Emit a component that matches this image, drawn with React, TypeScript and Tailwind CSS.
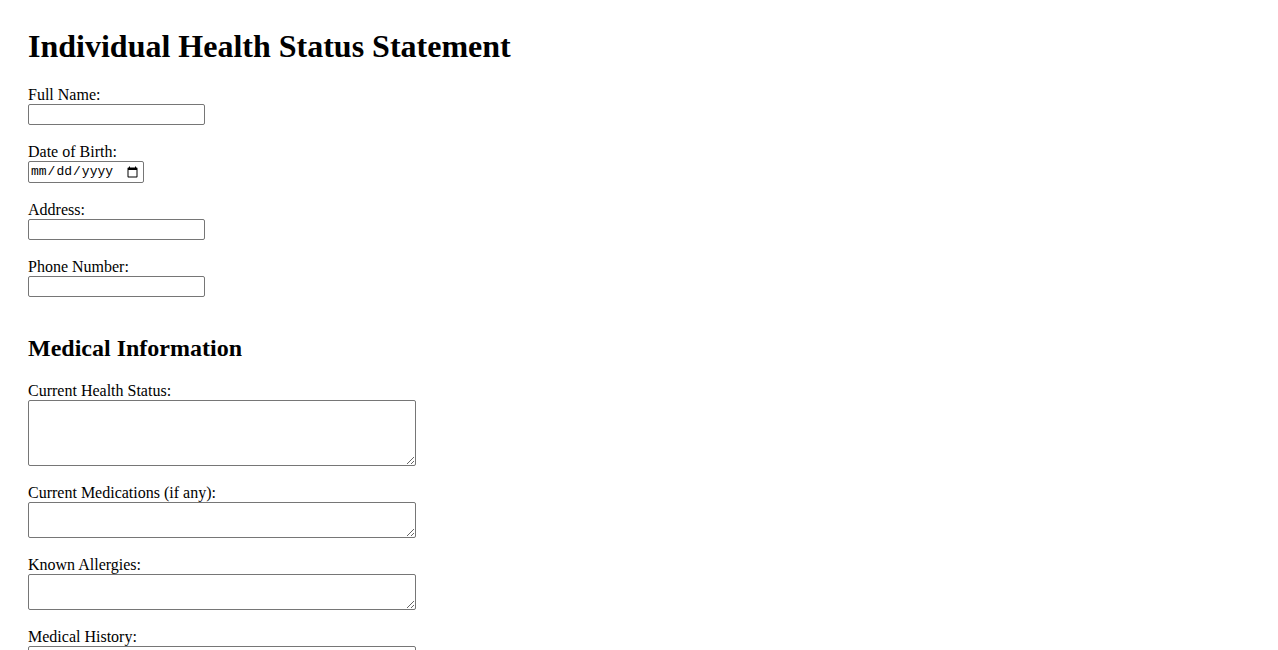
import { useState } from "react"

type Field = { id: string; label: string; type: string }

const personal: Field[] = [
  { id: "fullName", label: "Full Name:", type: "text" },
  { id: "dob", label: "Date of Birth:", type: "date" },
  { id: "address", label: "Address:", type: "text" },
  { id: "phone", label: "Phone Number:", type: "tel" },
]

const medical = [
  { id: "healthStatus", label: "Current Health Status:", rows: "h-[66px]" },
  { id: "medications", label: "Current Medications (if any):", rows: "h-[36px]" },
  { id: "allergies", label: "Known Allergies:", rows: "h-[36px]" },
  { id: "history", label: "Medical History:", rows: "h-[36px]" },
]

export default function App() {
  const [values, setValues] = useState<Record<string, string>>({})

  const update = (id: string, v: string) => setValues({ ...values, [id]: v })

  return (
    <div className="min-h-screen bg-white px-[28px] pt-[28px] pb-10 text-[16px] text-black font-['Liberation_Serif','Times_New_Roman',serif]">
      <h1 className="text-[32px] font-bold leading-[37px] mb-[21px]">Individual Health Status Statement</h1>

      <form onSubmit={(e) => e.preventDefault()}>
        {personal.map((f) => (
          <div key={f.id} className="mb-[18px]">
            <label htmlFor={f.id} className="block leading-[18px]">
              {f.label}
            </label>
            {f.type === "date" ? (
              <input
                id={f.id}
                type="date"
                value={values[f.id] || ""}
                onChange={(e) => update(f.id, e.target.value)}
                className="block h-[22px] w-[116px] rounded-[2px] border border-[#767676] bg-white pl-[1px] pr-[2px] text-[13px] font-['Liberation_Mono',monospace]"
              />
            ) : (
              <input
                id={f.id}
                type={f.type}
                value={values[f.id] || ""}
                onChange={(e) => update(f.id, e.target.value)}
                className="block h-[21px] w-[177px] rounded-[2px] border border-[#767676] bg-white px-[2px] text-[13px] font-['Liberation_Sans',sans-serif] focus:outline-none"
              />
            )}
          </div>
        ))}

        <h2 className="mt-[37px] mb-[20px] text-[24px] font-bold leading-[28px]">Medical Information</h2>

        {medical.map((f) => (
          <div key={f.id} className="mb-[18px]">
            <label htmlFor={f.id} className="block leading-[18px]">
              {f.label}
            </label>
            <textarea
              id={f.id}
              value={values[f.id] || ""}
              onChange={(e) => update(f.id, e.target.value)}
              className={`block w-[388px] ${f.rows} rounded-[2px] border border-[#767676] bg-white p-[2px] text-[13px] font-['Liberation_Mono',monospace] focus:outline-none`}
            />
          </div>
        ))}
      </form>
    </div>
  )
}
